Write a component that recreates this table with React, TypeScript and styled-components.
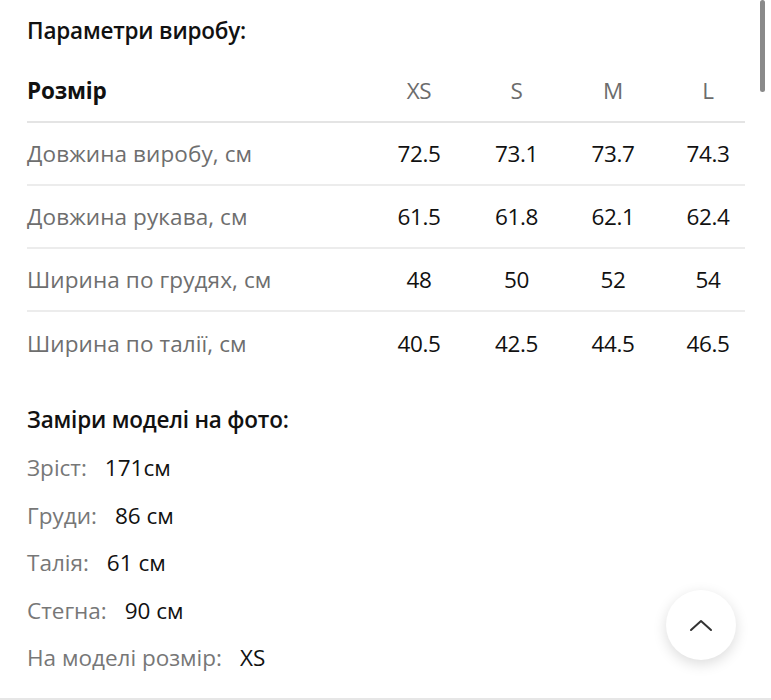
import React from "react";
import styled, { createGlobalStyle } from "styled-components";

const Global = createGlobalStyle`
  html, body { margin: 0; padding: 0; background: #fff; }
  body { font-family: "Open Sans", "Lato", sans-serif; color: #111; overflow: hidden; }
`;

const Page = styled.div`
  position: relative;
  width: 771px;
  height: 700px;
  box-sizing: border-box;
  padding: 16px 26px 0 27px;
  border-bottom: 2px solid #e6e6e6;
`;

const Title = styled.h2<{ $weight?: number }>`
  margin: 0;
  font-size: 22.5px;
  line-height: 30px;
  font-weight: ${(p) => p.$weight ?? 600};
  color: #111;
  letter-spacing: -0.2px;
`;

const Table = styled.div`
  margin-top: 14px;
  display: flex;
  flex-direction: column;
`;

const Row = styled.div<{ $head?: boolean }>`
  display: grid;
  grid-template-columns: 1fr 98px 97px 96px 84px;
  align-items: center;
  height: 63px;
  border-bottom: ${(p) => (p.$head ? "2px solid #e4e4e4" : "2px solid #ececec")};
  box-sizing: border-box;
  &:last-child { border-bottom: none; }
`;

const Label = styled.div<{ $head?: boolean }>`
  font-size: 22.5px;
  font-weight: ${(p) => (p.$head ? 700 : 400)};
  color: ${(p) => (p.$head ? "#111" : "#6e6e6e")};
  letter-spacing: ${(p) => (p.$head ? "-0.2px" : "0.1px")};
`;

const Cell = styled.div<{ $head?: boolean; $shift?: number }>`
  text-align: center;
  font-size: 22.5px;
  padding-left: ${(p) => p.$shift ?? 0}px;
  color: ${(p) => (p.$head ? "#6c6c6c" : "#111")};
  letter-spacing: -0.4px;
`;

const Section = styled.div`
  margin-top: 30px;
`;

const Facts = styled.div`
  margin-top: 9px;
  display: flex;
  flex-direction: column;
`;

const Fact = styled.div`
  height: 47.5px;
  display: flex;
  align-items: center;
  font-size: 22.5px;
  letter-spacing: 0px;
`;

const FactLabel = styled.span`
  color: #777;
  margin-right: 18px;
`;

const FactValue = styled.span`
  color: #111;
`;

const Scrollbar = styled.div`
  position: absolute;
  right: 6px;
  top: 0;
  width: 5px;
  height: 92px;
  border-radius: 3px;
  background: #8a8a8a;
`;

const UpButton = styled.button`
  position: absolute;
  left: 666px;
  top: 590px;
  width: 70px;
  height: 70px;
  border-radius: 50%;
  border: none;
  background: #fff;
  box-shadow: 0 4px 14px rgba(0, 0, 0, 0.14);
  display: flex;
  align-items: center;
  justify-content: center;
  padding: 0;
`;

const sizes = ["XS", "S", "M", "L"];
const rows: [string, string[]][] = [
  ["Довжина виробу, см", ["72.5", "73.1", "73.7", "74.3"]],
  ["Довжина рукава, см", ["61.5", "61.8", "62.1", "62.4"]],
  ["Ширина по грудях, см", ["48", "50", "52", "54"]],
  ["Ширина по талії, см", ["40.5", "42.5", "44.5", "46.5"]],
];
const facts: [string, string][] = [
  ["Зріст:", "171см"],
  ["Груди:", "86 см"],
  ["Талія:", "61 см"],
  ["Стегна:", "90 см"],
  ["На моделі розмір:", "XS"],
];

export default function App() {
  return (
    <>
      <Global />
      <Page>
        <Title>Параметри виробу:</Title>
        <Table>
          <Row $head>
            <Label $head>Розмір</Label>
            {sizes.map((s, i) => (
              <Cell $head key={s} $shift={i === 3 ? 10 : 0}>{s}</Cell>
            ))}
          </Row>
          {rows.map(([label, vals]) => (
            <Row key={label}>
              <Label>{label}</Label>
              {vals.map((v, i) => (
                <Cell key={i} $shift={i === 3 ? 10 : 0}>{v}</Cell>
              ))}
            </Row>
          ))}
        </Table>
        <Section>
          <Title>Заміри моделі на фото:</Title>
          <Facts>
            {facts.map(([l, v]) => (
              <Fact key={l}>
                <FactLabel>{l}</FactLabel>
                <FactValue>{v}</FactValue>
              </Fact>
            ))}
          </Facts>
        </Section>
        <Scrollbar />
        <UpButton aria-label="Вгору">
          <svg width="24" height="14" viewBox="0 0 24 14" fill="none">
            <path d="M2 12 L12 3 L22 12" stroke="#333" strokeWidth="2" strokeLinecap="round" strokeLinejoin="round" />
          </svg>
        </UpButton>
      </Page>
    </>
  );
}
